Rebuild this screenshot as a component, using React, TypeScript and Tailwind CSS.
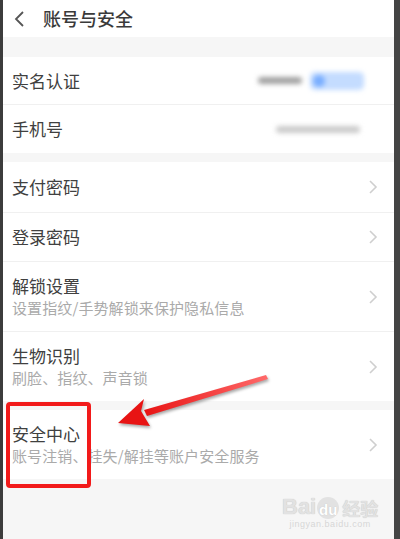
import React from "react";

const font = { fontFamily: '"Noto Sans CJK SC", "Noto Sans", sans-serif' };

function Chevron() {
  return (
    <svg width="10" height="16" viewBox="0 0 10 16" className="shrink-0">
      <path d="M2 2 L8 8 L2 14" fill="none" stroke="#cfcfcf" strokeWidth="1.6" />
    </svg>
  );
}

function Row({ title, sub, right, chevron = true, divider = true, h }: { title: string; sub?: string; right?: React.ReactNode; chevron?: boolean; divider?: boolean; h: string }) {
  return (
    <div className={`flex items-center pl-[9px] pr-[16px] bg-white ${h} ${divider ? "border-b border-[#f0f0f0]" : ""}`}>
      <div className="flex flex-col flex-1">
        <div className="text-[17px] leading-[22px] text-[#404040]">{title}</div>
        {sub && <div className="text-[15px] leading-[22px] text-[#aaaaaa] tracking-[0.1px]">{sub}</div>}
      </div>
      {right}
      {chevron && <Chevron />}
    </div>
  );
}

export default function App() {
  return (
    <div className="relative flex w-[400px] h-[539px] overflow-hidden bg-[#f5f5f5]" style={font}>
      <div className="w-[3px] bg-[#3c3c3c]" />
      <div className="flex-1 flex flex-col bg-[#f6f6f6]">
        <div className="h-[37px] bg-white flex items-center">
          <svg width="14" height="18" viewBox="0 0 14 18" className="ml-[10px]">
            <path d="M10 2 L3 9 L10 16" fill="none" stroke="#555" strokeWidth="1.8" />
          </svg>
          <div className="ml-[16px] text-[18px] text-[#3a3a3a] font-medium">账号与安全</div>
        </div>
        <div className="h-[20px]" />
        <div className="flex flex-col">
          <Row
            title="实名认证"
            h="h-[48px]"
            chevron={false}
            right={
              <div className="flex items-center gap-[8px] mr-[14px] blur-[2.5px]">
                <div className="w-[44px] h-[7px] bg-[#a0a0a0] rounded" />
                <div className="w-[54px] h-[18px] bg-[#c4dcff] rounded-[5px] flex items-center px-[3px]">
                  <div className="w-[12px] h-[12px] rounded-full bg-[#78adff]" />
                </div>
              </div>
            }
          />
          <Row
            title="手机号"
            h="h-[48px]"
            divider={false}
            chevron={false}
            right={<div className="w-[84px] h-[7px] bg-[#cacaca] rounded mr-[18px] blur-[2.5px]" />}
          />
        </div>
        <div className="h-[9px]" />
        <div className="flex flex-col">
          <Row title="支付密码" h="h-[51px]" />
          <Row title="登录密码" h="h-[49px]" />
          <Row title="解锁设置" sub="设置指纹/手势解锁来保护隐私信息" h="h-[70px]" />
          <Row title="生物识别" sub="刷脸、指纹、声音锁" h="h-[69px]" divider={false} />
        </div>
        <div className="h-[9px]" />
        <Row title="安全中心" sub="账号注销、挂失/解挂等账户安全服务" h="h-[69px]" divider={false} />
        <div className="flex-1 bg-[#f6f6f6]" />
      </div>
      <div className="w-[6px] bg-[#444]" />

      {/* red highlight box */}
      <div className="absolute left-[6px] top-[402px] w-[85px] h-[86px] border-[4px] border-[#f21a1a] rounded-[4px]" />

      {/* arrow */}
      <svg className="absolute left-0 top-0" width="400" height="539" viewBox="0 0 400 539">
        <defs>
          <linearGradient id="ag" x1="0" y1="0" x2="1" y2="0">
            <stop offset="0" stopColor="#e81414" />
            <stop offset="1" stopColor="#ff6a6a" />
          </linearGradient>
        </defs>
        <g style={{ filter: "drop-shadow(1px 2px 1.5px rgba(0,0,0,0.35))" }}>
          <path d="M144 410 L266 375 L268 379 L147 416 Z" fill="url(#ag)" />
          <path d="M118 423 L144 399 L141 411 L150 426 Z" fill="#e81414" />
        </g>
      </svg>

      {/* watermark */}
      <div className="absolute left-[282px] top-[495px] flex flex-col items-center" style={{ fontFamily: '"Liberation Sans", sans-serif' }}>
        <div className="flex items-end text-[#e2e2e2] font-bold" style={{ textShadow: "0 0 1px #bbb" }}>
          <span className="text-[22px] leading-[24px]">Bai</span>
          <span className="relative mx-[1px] text-[15px] leading-[18px] w-[22px] h-[22px] rounded-full bg-[#e2e2e2] text-white flex items-end justify-center">du</span>
          <span className="text-[18px] leading-[22px] ml-[2px]" style={font}>经验</span>
        </div>
        <div className="text-[9px] leading-[11px] text-[#d6d6d6] tracking-[0.5px]">jingyan.baidu.com</div>
      </div>
    </div>
  );
}
